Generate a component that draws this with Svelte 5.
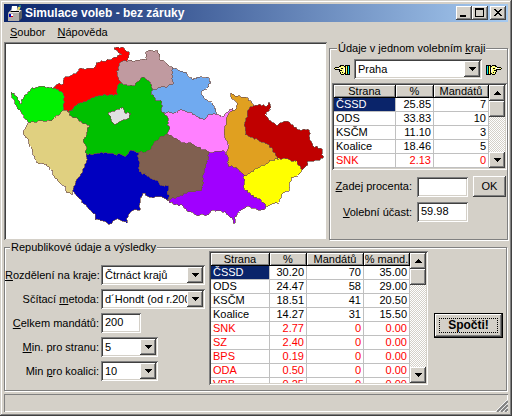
<script>
  let region = $state('Praha');
  let percent = $state('');
  let turnout = $state('59.98');
  let division = $state('Čtrnáct krajů');
  let method = $state('d´Hondt (od r.2002)');
  let total = $state('200');
  let minParty = $state('5');
  let minCoalition = $state('10');

  const regionRows = [
    { party: 'ČSSD', pct: '25.85', seats: 7 },
    { party: 'ODS', pct: '33.83', seats: 10 },
    { party: 'KSČM', pct: '11.10', seats: 3 },
    { party: 'Koalice', pct: '18.46', seats: 5 },
    { party: 'SNK', pct: '2.13', seats: 0 },
    { party: '', pct: '', seats: '' }
  ];

  const totalRows = [
    { party: 'ČSSD', pct: '30.20', seats: 70, share: '35.00' },
    { party: 'ODS', pct: '24.47', seats: 58, share: '29.00' },
    { party: 'KSČM', pct: '18.51', seats: 41, share: '20.50' },
    { party: 'Koalice', pct: '14.27', seats: 31, share: '15.50' },
    { party: 'SNK', pct: '2.77', seats: 0, share: '0.00' },
    { party: 'SZ', pct: '2.40', seats: 0, share: '0.00' },
    { party: 'BPS', pct: '0.19', seats: 0, share: '0.00' },
    { party: 'ODA', pct: '0.50', seats: 0, share: '0.00' },
    { party: 'VPB', pct: '0.25', seats: 0, share: '0.00' }
  ];

  // painted in this order, later regions cover the borders of earlier ones
  const regions = [
    { name: 'Královéhradecký', fill: '#70aaf0', points: '172,67 182,71 187,74 193,80 197,77 207,77 211,82 207,88 201,93 204,98 212,103 216,109 217,115 217,119 209,124 190,122 166,120 160,114 150,104 148,92 150,80 164,80' },
    { name: 'Pardubický', fill: '#ff80ff', points: '162,112 172,113 180,110 190,112 200,119 204,120 210,114 217,114 222,117 229,111 233,108 233,125 229,135 233,150 226,158 210,158 190,150 174,145 160,137 162,125' },
    { name: 'Olomoucký', fill: '#e0a020', points: '231,93 235,96 244,97 251,101 253,104 256,110 254,128 262,138 278,150 282,160 272,166 255,174 250,180 240,176 228,168 227,155 229,145 226,140 224,130 226,122 230,112 237,108 237,103 231,97' },
    { name: 'Moravskoslezský', fill: '#c00000', points: '250,107 256,105 267,106 269,102 271,108 265,115 271,121 277,126 285,121 293,125 300,130 309,130 310,140 313,146 322,149 323,158 318,160 309,161 305,167 302,170 292,168 279,160 275,153 267,144 258,140 245,135 245,130 246,118' },
    { name: 'Jihomoravský', fill: '#a000ff', points: '209,152 217,151 225,152 228,157 228,166 236,167 243,174 250,180 252,195 264,200 266,208 261,210 254,208 247,206 240,211 235,217 234,224 232,218 226,213 219,211 212,210 207,215 196,215 189,212 183,206 173,204 167,200 178,190 196,184 198,170' },
    { name: 'Zlínský', fill: '#ffff00', points: '279,158 290,160 297,162 302,170 298,175 291,178 289,191 282,194 279,202 272,204 267,207 261,200 251,195 244,188 244,176 250,173 256,168 266,164 272,160' },
    { name: 'Vysočina', fill: '#806050', points: '160,134 167,134 174,138 186,144 191,143 203,150 209,152 207,163 203,175 203,186 200,191 188,192 177,197 167,200 160,194 150,184 134,174 134,148 148,142' },
    { name: 'Jihočeský', fill: '#0000c0', points: '84,150 131,148 138,152 139,172 146,175 152,179 158,181 160,185 169,186 167,192 169,195 167,200 162,197 155,197 149,197 143,193 140,198 140,210 134,210 128,215 127,223 120,220 115,220 110,224 103,221 95,220 95,214 90,210 84,204 80,199 73,191 72,180 80,164' },
    { name: 'Ústecký', fill: '#ff0000', points: '53,88 58,84 63,84 64,78 70,76 76,74 79,69 86,69 94,68 96,63 106,61 113,58 122,55 118,52 114,48 118,47 124,48 129,52 129,57 128,60 125,75 123,92 117,100 90,108 71,116 62,110 60,94' },
    { name: 'Liberecký', fill: '#c09aa0', points: '128,60 133,62 140,60 147,59 146,52 150,50 158,51 160,60 166,63 172,67 173,84 165,87 158,88 150,90 128,90 121,82 117,75 118,68 121,62' },
    { name: 'Středočeský', fill: '#00c000', points: '143,77 150,82 152,85 151,92 155,100 162,102 162,112 165,115 168,118 167,125 170,128 167,134 160,137 153,145 147,151 138,153 131,150 126,156 107,153 98,153 88,155 80,150 80,128 71,118 68,112 74,107 80,103 88,100 98,96 106,95 117,95 118,85 122,83 128,86 133,86 140,80' },
    { name: 'Praha', fill: '#e0e0e0', points: '109,112 120,109 123,108 124,112 131,114 127,119 121,121 115,125 111,119 109,115' },
    { name: 'Plzeňský', fill: '#e0d080', points: '67,110 71,116 78,119 84,124 89,125 87,132 83,142 86,146 86,163 82,173 76,181 73,190 73,194 67,193 66,187 58,181 51,170 46,164 39,164 33,155 31,147 27,138 23,134 25,129 28,123 34,118 52,116 62,108' },
    { name: 'Karlovarský', fill: '#00f000', points: '11,92 14,93 18,100 20,104 24,97 31,89 36,87 44,86 50,88 55,88 59,91 63,93 64,98 64,110 60,114 54,118 50,121 38,121 30,123 25,119 21,112 17,107 15,102 12,98' }
  ];

  // breaks the straight edges into small teeth so they look like surveyed borders
  function rough(points) {
    const pts = points.split(' ').map((p) => p.split(',').map(Number));
    const out = [];
    pts.forEach(([x1, y1], i) => {
      const [x2, y2] = pts[(i + 1) % pts.length];
      const len = Math.hypot(x2 - x1, y2 - y1) || 1;
      const steps = Math.max(1, Math.round(len / 2));
      out.push(`${x1},${y1}`);
      for (let s = 1; s < steps; s++) {
        const t = s / steps;
        const x = x1 + (x2 - x1) * t;
        const y = y1 + (y2 - y1) * t;
        const noise = Math.sin(x * 12.9898 + y * 78.233) * 43758.5453;
        const d = (noise - Math.floor(noise) - 0.5) * 2.2;
        out.push(`${(x - ((y2 - y1) / len) * d).toFixed(1)},${(y + ((x2 - x1) / len) * d).toFixed(1)}`);
      }
    });
    return out.join(' ');
  }
</script>

{#snippet arrow(dir)}
  <svg class="arrow" viewBox="0 0 7 4" aria-hidden="true">
    <path d={dir === 'up' ? 'M3 0h1v1h1v1h1v1h1v1H0V3h1V2h1V1h1z' : 'M0 0h7v1H6v1H5v1H4v1H3V3H2V2H1V1H0z'} />
  </svg>
{/snippet}

{#snippet hand()}
  <svg class="hand" viewBox="0 0 16 13" shape-rendering="crispEdges" aria-hidden="true">
    <path fill="#000" d="M0 2h5v10H0z" />
    <path fill="#00e0e0" d="M1 3h1v8H1z" />
    <path fill="#ffff40" d="M3 3h1v8H3z" />
    <path fill="#000" d="M5 3h1V2h4v1h1v1h4v1h1v1h-1v1h-4v2h-1v2H9v1H6v-1H5z" />
    <path fill="#ffff80" d="M5 4h1V3h3v1h2v1h4v1h-5v1H9v1h1v1H9v2H6v-1H5z" />
    <path fill="#000" d="M7 5h2v1H7zM8 7h1v1H8zM7 9h1v1H7z" />
    <path fill="#fff" d="M5 5h1v4H5zM10 5h3v1h-3z" />
  </svg>
{/snippet}

{#snippet scrollbar()}
  <div class="scrollbar">
    <button class="scroll-btn" type="button" aria-label="Nahoru">{@render arrow('up')}</button>
    <div class="thumb"></div>
    <button class="scroll-btn last" type="button" aria-label="Dolů">{@render arrow('down')}</button>
  </div>
{/snippet}

<div class="window">
  <header class="title-bar">
    <svg class="app-icon" viewBox="0 0 16 16" aria-hidden="true">
      <path fill="#fff" d="M5 1h5l1 6H4z" />
      <path fill="#e8d860" d="M11 2l3-1-2 5h-2z" />
      <path fill="#208080" d="M12 0h2v2h-2z" />
      <path fill="#e4e0d8" d="M1 8l3-3h11l-3 3z" />
      <path fill="#b0aca8" d="M1 8h11v8H1z" />
      <path fill="#606060" d="M12 8l3-3v8l-3 3z" />
      <path fill="#000" d="M4 6h8v1H3z" />
      <path fill="#fff" d="M6 2h3v4H5zM2 9h4v2H2z" />
      <path fill="#e00000" d="M3 11h3v1H3z" />
      <path fill="#0000c0" d="M2 9h2v3H2z" />
    </svg>
    <h1>Simulace voleb - bez záruky</h1>
    <div class="window-buttons">
      <button type="button" aria-label="Minimalizovat">
        <svg viewBox="0 0 12 10"><path d="M2 7h6v2H2z" /></svg>
      </button>
      <button type="button" aria-label="Maximalizovat">
        <svg viewBox="0 0 12 10"><path fill-rule="evenodd" d="M1 0h9v9H1zM2 2v6h7V2z" /></svg>
      </button>
      <button class="close" type="button" aria-label="Zavřít">
        <svg viewBox="0 0 12 10" shape-rendering="crispEdges">
          <path d="M2 1h2v1h1v1h2V2h1V1h2v1H9v1H8v1H7v1h1v1h1v1h1v1H8V7H7V6H5v1H4v1H2V7h1V6h1V5h1V4H4V3H3V2H2z" />
        </svg>
      </button>
    </div>
  </header>

  <nav class="menu">
    <a href="#soubor"><u>S</u>oubor</a>
    <a href="#napoveda"><u>N</u>ápověda</a>
  </nav>

  <main>
    <div class="top">
      <div class="map">
        <svg viewBox="6 44 320 195" preserveAspectRatio="xMinYMin meet" shape-rendering="crispEdges">
          {#each regions as r}
            <polygon points={rough(r.points)} fill={r.fill}><title>{r.name}</title></polygon>
          {/each}
        </svg>
      </div>

      <fieldset class="region">
        <legend>Údaje v jednom volebním <u>k</u>raji</legend>
        <div class="picker">
          <button class="hand-btn prev" type="button" aria-label="Předchozí kraj">{@render hand()}</button>
          <div class="combo grow">
            <select bind:value={region} aria-label="Kraj">
              <option>Praha</option>
              <option>Středočeský</option>
            </select>
            <span class="drop">{@render arrow('down')}</span>
          </div>
          <button class="hand-btn next" type="button" aria-label="Další kraj">{@render hand()}</button>
        </div>

        <div class="grid region-grid">
          <div class="grid-view">
            <table>
              <colgroup><col class="c-name" /><col class="c-pct" /><col /></colgroup>
              <thead>
                <tr><th>Strana</th><th>%</th><th>Mandátů</th></tr>
              </thead>
              <tbody>
                {#each regionRows as row, i}
                  <tr class:out={row.seats === 0}>
                    <td class:selected={i === 0}>{row.party}</td>
                    <td>{row.pct}</td>
                    <td>{row.seats}</td>
                  </tr>
                {/each}
              </tbody>
            </table>
          </div>
          {@render scrollbar()}
        </div>

        <div class="entry">
          <label for="percent"><u>Z</u>adej procenta:</label>
          <input id="percent" bind:value={percent} />
          <button class="btn" type="button">OK</button>
          <label for="turnout"><u>V</u>olební účast:</label>
          <input id="turnout" bind:value={turnout} />
        </div>
      </fieldset>
    </div>

    <fieldset class="results">
      <legend>Republikové údaje a výsledky</legend>
      <div class="results-body">
        <div class="settings">
          <label for="division"><u>R</u>ozdělení na kraje:</label>
          <div class="combo">
            <select id="division" bind:value={division}>
              <option>Čtrnáct krajů</option>
              <option>Osm krajů</option>
            </select>
            <span class="drop">{@render arrow('down')}</span>
          </div>

          <label for="method">Sčítací <u>m</u>etoda:</label>
          <div class="combo">
            <select id="method" bind:value={method}>
              <option>d´Hondt (od r.2002)</option>
            </select>
            <span class="drop">{@render arrow('down')}</span>
          </div>

          <label for="total"><u>C</u>elkem mandátů:</label>
          <input id="total" class="total" bind:value={total} />

          <label for="min-party"><u>M</u>in. pro stranu:</label>
          <div class="combo small">
            <select id="min-party" bind:value={minParty}>
              <option>5</option>
              <option>3</option>
            </select>
            <span class="drop">{@render arrow('down')}</span>
          </div>

          <label for="min-coalition">Min <u>p</u>ro koalici:</label>
          <div class="combo small">
            <select id="min-coalition" bind:value={minCoalition}>
              <option>10</option>
              <option>7</option>
            </select>
            <span class="drop">{@render arrow('down')}</span>
          </div>
        </div>

        <div class="grid total-grid">
          <div class="grid-view">
            <table>
              <colgroup><col class="c-name" /><col class="c-pct" /><col class="c-seats" /><col /></colgroup>
              <thead>
                <tr><th>Strana</th><th>%</th><th>Mandátů</th><th>% mand.</th></tr>
              </thead>
              <tbody>
                {#each totalRows as row, i}
                  <tr class:out={row.seats === 0}>
                    <td class:selected={i === 0}>{row.party}</td>
                    <td>{row.pct}</td>
                    <td>{row.seats}</td>
                    <td>{row.share}</td>
                  </tr>
                {/each}
              </tbody>
            </table>
          </div>
          {@render scrollbar()}
        </div>

        <button class="btn default" type="button"><span>Spočti!</span></button>
      </div>
    </fieldset>
  </main>

  <footer class="status">
    <svg viewBox="0 0 13 13" aria-hidden="true">
      <path stroke="#fff" d="M0 13L13 0M4 13l9-9M8 13l5-5" />
      <path stroke="#808080" stroke-width="2" d="M2 13L13 2M6 13l7-7M10 13l3-3" />
    </svg>
  </footer>
</div>

<style>
  :global(body) { background: #d4d0c8; }
  .window {
    box-sizing: border-box;
    min-height: 100vh;
    display: flex;
    flex-direction: column;
    padding: 4px;
    background: #d4d0c8;
    box-shadow: inset -1px -1px #404040, inset 1px 1px #d4d0c8, inset -2px -2px #808080, inset 2px 2px #fff;
    font-family: "Liberation Sans", Arial, sans-serif;
    font-size: 11px;
    line-height: 13px;
    color: #000;
  }
  button, input, select {
    box-sizing: border-box;
    margin: 0;
    padding: 0;
    border: 0;
    border-radius: 0;
    font: inherit;
    color: inherit;
    outline: none;
  }
  svg { display: block; }

  .title-bar {
    display: flex;
    align-items: center;
    height: 18px;
    padding: 0 2px 0 3px;
    background: linear-gradient(to right, #0a246a, #a6caf0);
  }
  .app-icon { width: 16px; height: 16px; }
  h1 { flex: 1; margin: 0 0 0 2px; font-size: 12px; line-height: 16px; color: #fff; }
  .window-buttons { display: flex; }
  .window-buttons button {
    display: grid;
    place-items: center;
    width: 16px;
    height: 14px;
    background: #d4d0c8;
    box-shadow: inset -1px -1px #404040, inset 1px 1px #fff, inset -2px -2px #808080;
  }
  .window-buttons svg { width: 12px; height: 10px; }
  .window-buttons .close { margin-left: 2px; }

  .menu { display: flex; gap: 12px; height: 16px; padding: 4px 6px 0; }
  .menu a { color: #000; text-decoration: none; }

  main { flex: 1; display: flex; flex-direction: column; gap: 1px; }
  .top { display: grid; grid-template-columns: 323fr 179fr; gap: 2px; }
  .map {
    padding: 2px 1px 1px 2px;
    background: #fff;
    box-shadow: inset 1px 1px #808080, inset -1px -1px #d4d0c8, inset 2px 2px #404040;
  }
  .map svg { width: 100%; }
  .map polygon { stroke: #705048; stroke-width: 0.7; }

  fieldset {
    min-width: 0;
    margin: 0;
    padding: 0;
    border: 1px solid #808080;
    box-shadow: 1px 1px #fff, inset 1px 1px #fff;
  }
  legend { margin-left: 5px; padding: 0 1px; background: #d4d0c8; line-height: 13px; }
  .region { padding: 4px 0 0 2px; }

  .picker { display: flex; align-items: center; gap: 4px; padding: 0 5px 0 2px; }
  .hand-btn { background: none; }
  .hand { width: 16px; height: 13px; }
  .prev .hand { transform: scaleX(-1); }

  .combo { position: relative; width: 104px; height: 20px; }
  .combo.grow { flex: 1; }
  .combo.small { width: 57px; }
  select {
    appearance: none;
    width: 100%;
    height: 100%;
    padding: 1px 16px 0 4px;
  }
  select, input {
    background: #fff;
    box-shadow: inset 1px 1px #808080, inset -1px -1px #fff, inset 2px 2px #404040, inset -2px -2px #d4d0c8;
  }
  .drop {
    position: absolute;
    top: 2px;
    right: 2px;
    bottom: 2px;
    width: 16px;
    pointer-events: none;
  }
  .drop, .scroll-btn {
    display: grid;
    place-items: center;
    background: #d4d0c8;
    box-shadow: inset -1px -1px #404040, inset 1px 1px #fff, inset -2px -2px #808080;
  }
  .arrow { width: 7px; height: 4px; }

  input { width: 51px; height: 20px; padding: 0 4px 3px; }

  .grid {
    display: flex;
    padding: 2px;
    background: #fff;
    box-shadow: inset 1px 1px #808080, inset -1px -1px #fff, inset 2px 2px #404040, inset -2px -2px #d4d0c8;
  }
  .grid-view { flex: 1; min-width: 0; overflow: hidden; }
  .region-grid { height: 87px; box-sizing: border-box; margin-top: 4px; }
  .total-grid { flex: 1; height: 134px; box-sizing: border-box; }
  table { width: 100%; table-layout: fixed; border-collapse: separate; border-spacing: 0; }
  .region-grid .c-name { width: 62px; }
  .region-grid .c-pct { width: 38px; }
  .total-grid .c-name { width: 59px; }
  .total-grid .c-pct { width: 37px; }
  .total-grid .c-seats { width: 57px; }
  th {
    height: 13px;
    padding: 0;
    font-weight: normal;
    line-height: 12px;
    background: #d4d0c8;
    border-right: 1px solid #000;
    border-bottom: 1px solid #000;
    box-shadow: inset 1px 1px #fff, inset -1px -1px #808080;
    box-sizing: border-box;
  }
  td {
    height: 14px;
    padding: 0 2px;
    line-height: 13px;
    text-align: right;
    border-right: 1px solid #c0c0c0;
    border-bottom: 1px solid #c0c0c0;
    box-sizing: border-box;
  }
  td:first-child { text-align: left; }
  .out { color: #f00; }
  .selected { background: #0a246a; color: #fff; }

  .scrollbar {
    display: flex;
    flex-direction: column;
    width: 16px;
    background: repeating-conic-gradient(#fff 0 25%, #d4d0c8 0 50%) 0 0 / 2px 2px;
  }
  .scroll-btn { width: 16px; height: 16px; }
  .scroll-btn.last { margin-top: auto; }
  .thumb {
    height: 16px;
    background: #d4d0c8;
    box-shadow: inset -1px -1px #404040, inset 1px 1px #fff, inset -2px -2px #808080;
  }

  .entry {
    display: grid;
    grid-template-columns: 1fr 51px 33px;
    align-items: center;
    gap: 5px;
    padding: 6px 1px 16px 0;
  }
  .entry label, .settings label { text-align: right; white-space: nowrap; }
  .btn {
    height: 21px;
    background: #d4d0c8;
    box-shadow: inset -1px -1px #404040, inset 1px 1px #fff, inset -2px -2px #808080;
  }

  .results { flex: 1; margin-right: 1px; }
  .results-body { display: flex; align-items: flex-start; margin-top: -3px; padding: 0 3px 5px 0; }
  .settings {
    display: grid;
    grid-template-columns: 94px 104px;
    grid-auto-rows: 20px;
    align-items: center;
    gap: 4px 2px;
    margin: 14px 4px 0 0;
  }
  .settings .total { width: 40px; }
  .default {
    align-self: center;
    width: 69px;
    height: 25px;
    margin: 14px 0 0 6px;
    padding: 4px;
    border: 1px solid #000;
    font-size: 12px;
    font-weight: bold;
  }
  .default span { display: block; border: 1px dotted #000; line-height: 13px; }

  .status {
    display: flex;
    justify-content: flex-end;
    align-items: flex-end;
    height: 18px;
    margin-top: 3px;
    box-shadow: inset 1px 1px #808080, inset -1px -1px #fff;
  }
  .status svg { width: 13px; height: 13px; }
</style>
